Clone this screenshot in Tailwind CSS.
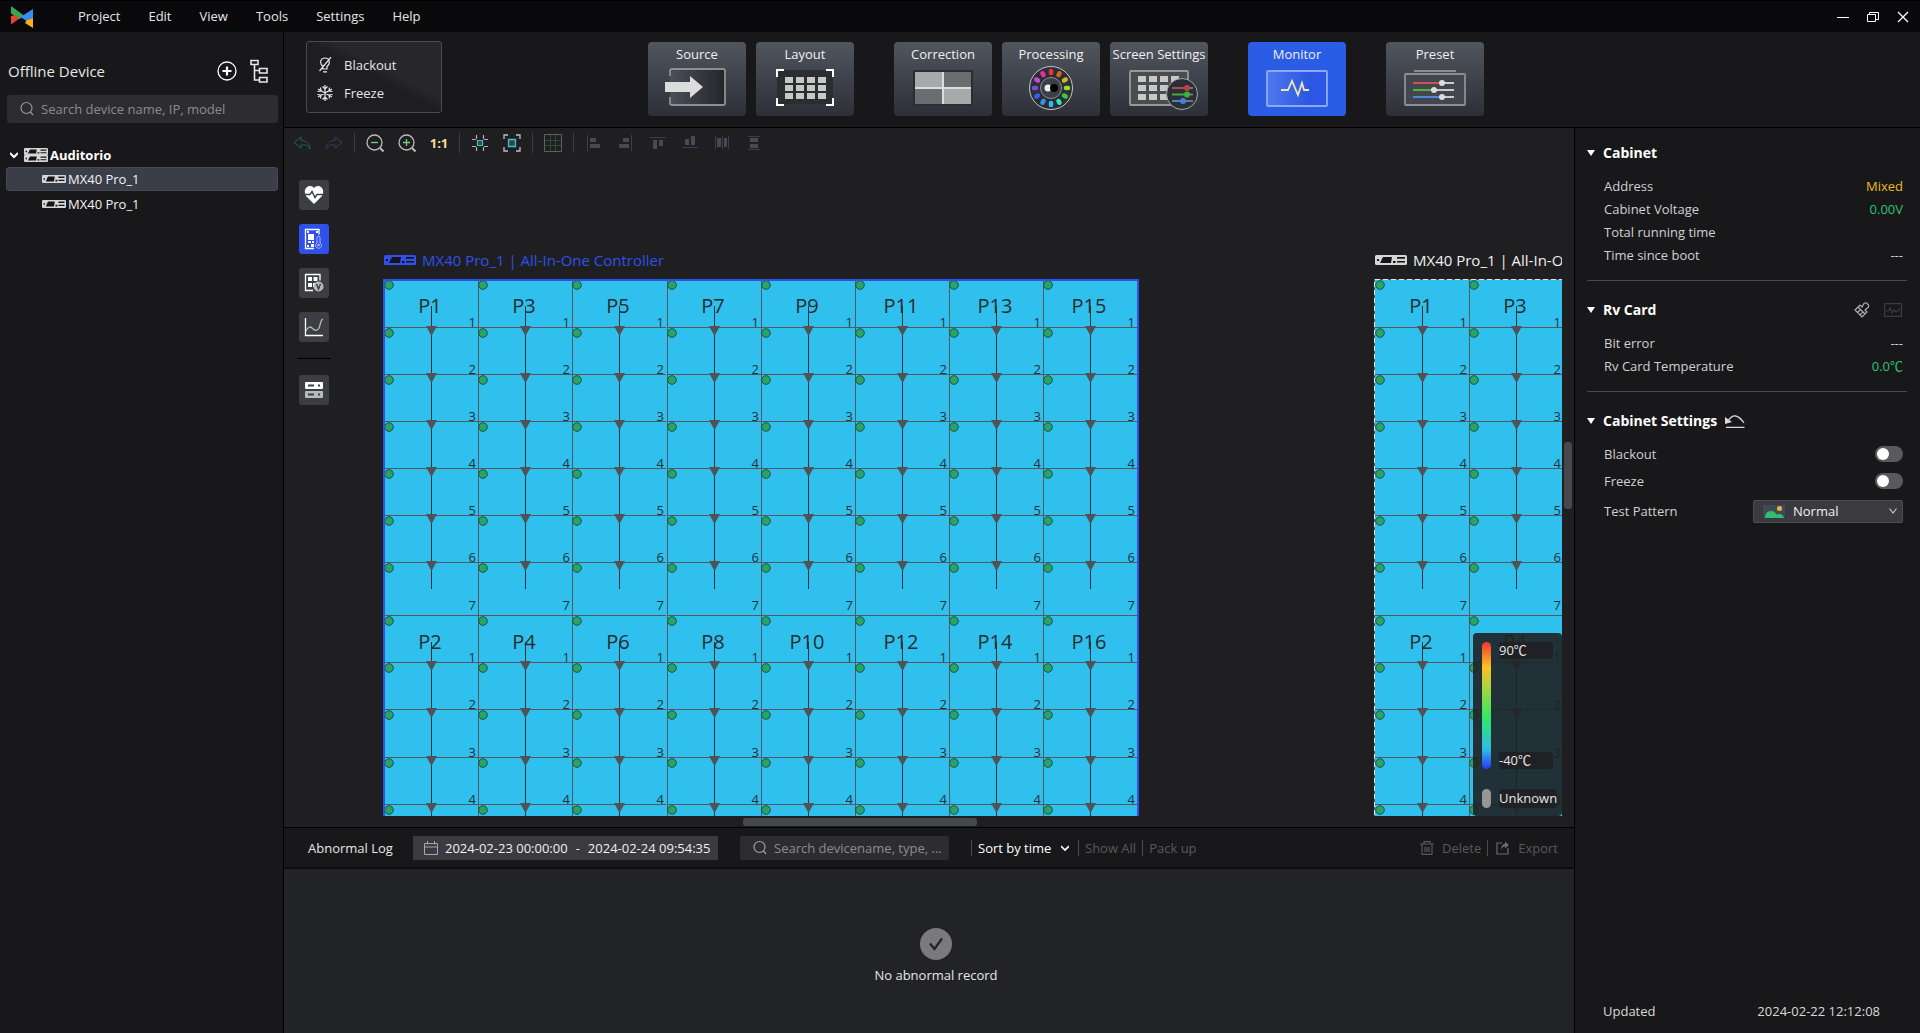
<!DOCTYPE html>
<html lang="en">
<head>
<meta charset="utf-8">
<title>Screen Monitor</title>
<script src="https://cdn.jsdelivr.net/npm/@tailwindcss/browser@4"></script>
</head>
<body class="h-screen flex flex-col overflow-hidden bg-[#18181a] text-[#e6e6e6] text-[13px] leading-5 font-['Open_Sans','Noto_Sans_CJK_SC',sans-serif]">

<svg class="hidden">
  <symbol id="device" viewBox="0 0 32 10" preserveAspectRatio="none">
    <rect width="32" height="10" rx="1.500" fill="currentColor"/>
    <path d="M8 2h9l-1 6H5z" fill="#151517"/>
    <path d="M2 4h2v2H2zM18 6h2.500v2H18zM22 2h8v1.800h-8zM22 6h8v1.600h-8z" fill="#151517"/>
  </symbol>
  <symbol id="search" viewBox="0 0 16 16">
    <circle cx="7.500" cy="7" r="5.500" fill="none" stroke="currentColor" stroke-width="1.200"/>
    <path d="M11.500 11l2.500 3" stroke="currentColor" stroke-width="1.200"/>
  </symbol>
</svg>

<!-- Title bar -->
<header class="h-8 shrink-0 flex items-center bg-[#09090b] px-[11px] border-t border-black">
  <svg class="w-[22px] h-[22px]" viewBox="0 0 22 22">
    <path d="M0 0l13 9.500L9 13 0 7.500z" fill="#34a853"/>
    <path d="M0 18.500V10l4-1 4.500 3.500z" fill="#ea4335"/>
    <path d="M22 3v9L15.500 15 9.500 11z" fill="#3b8bf5"/>
    <path d="M15.500 14.500L22 12v10L14 17z" fill="#fbae17"/>
  </svg>
  <nav class="flex gap-7 ml-[45px] pb-px">
    <a href="#">Project</a><a href="#">Edit</a><a href="#">View</a><a href="#">Tools</a><a href="#">Settings</a><a href="#">Help</a>
  </nav>
  <div class="ml-auto flex items-center gap-[18px]">
    <button aria-label="Minimize"><svg class="w-3 h-3" viewBox="0 0 12 12"><path d="M0 6.500h12" stroke="#fff"/></svg></button>
    <button aria-label="Restore"><svg class="w-3 h-3" viewBox="0 0 12 12" fill="none" stroke="#fff"><path d="M.5 3.500h8v7h-8zM2.500 3.500v-2h9v7h-3"/></svg></button>
    <button aria-label="Close"><svg class="w-3 h-3" viewBox="0 0 12 12"><path d="M1 1l10 10M11 1L1 11" stroke="#fff" stroke-width="1.300"/></svg></button>
  </div>
</header>

<div class="flex-1 min-h-0 flex">
  <!-- Device list -->
  <aside class="w-[284px] shrink-0 border-r border-black">
    <div class="flex items-center mt-[23px] pl-2 pr-[15px] h-8">
      <h2 class="text-[15px]">Offline Device</h2>
      <button aria-label="Add device" class="ml-auto"><svg class="w-5 h-5" viewBox="0 0 20 20" fill="none" stroke="#fff"><circle cx="10" cy="10" r="9" stroke-width="1.300"/><path d="M10 5.500v9M5.500 10h9" stroke-width="2.200"/></svg></button>
      <button aria-label="Topology" class="ml-[13px]"><svg class="w-[18px] h-6" viewBox="0 0 18 24" fill="none" stroke="#e6e6e6" stroke-width="1.600"><path d="M1 1.500h7v4H1zM9.500 9.500H17v4.500H9.500zM9.500 18.500H17V23H9.500zM4.500 6v15h5M4.500 11.500h5"/></svg></button>
    </div>
    <label class="flex items-center h-7 ml-[7px] mr-[5px] mt-2 rounded-[3px] bg-[#2d2d31] pl-3 text-[#98989a]">
      <svg class="w-4 h-4"><use href="#search"/></svg>
      <input class="flex-1 ml-[6px] outline-none bg-transparent placeholder:text-[#8c8c8e]" aria-label="Search devices" placeholder="Search device name, IP, model">
    </label>
    <ul class="mt-[19px] pl-[6px] pr-[5px] text-[#f2f2f2]">
      <li class="flex items-center h-[25px] pl-1 font-bold text-white">
        <svg class="w-2 h-2" viewBox="0 0 8 8"><path d="M0 2l4 4 4-4" fill="none" stroke="#fff" stroke-width="2"/></svg>
        <svg class="w-6 h-[14px] ml-[6px] mr-[2px] text-[#d6d6d6]" viewBox="0 0 24 14"><use href="#device" width="24" height="7"/><use href="#device" y="7" width="24" height="7"/></svg>Auditorio
      </li>
      <li class="flex items-center h-6 pl-[35px] rounded-[3px] bg-[#3b3d49] border border-[#474955]"><svg class="w-6 h-2 mr-[2px] text-[#d6d6d6]"><use href="#device"/></svg>MX40 Pro_1</li>
      <li class="flex items-center h-[25px] pl-9"><svg class="w-6 h-2 mr-[2px] text-[#d6d6d6]"><use href="#device"/></svg>MX40 Pro_1</li>
    </ul>
  </aside>

  <div class="flex-1 min-w-0 flex flex-col">
    <!-- Mode switcher -->
    <div class="h-24 shrink-0 flex items-start border-b border-black pl-[22px] pt-[9px]">
      <div class="w-[136px] h-[72px] rounded-[3px] border border-[#4a4a50] bg-linear-to-tr from-[#1e1e22] from-50% to-[#27272b] to-60% flex flex-col justify-center gap-2 pl-[10px] pt-[3px]">
        <button class="flex items-center gap-[11px] h-5">
          <svg class="w-4 h-4" viewBox="0 0 16 16" fill="none" stroke="#e6e6e6" stroke-width="1.200"><path d="M6 12V9.500C2 6 3.500 1 8 1s6 5 2 8.500V12zM6 14.800h4M14 0L2.500 14"/></svg>Blackout</button>
        <button class="flex items-center gap-[11px] h-5">
          <svg class="w-4 h-4" viewBox="0 0 16 16" fill="none" stroke="#e6e6e6" stroke-width="1.200"><path d="M8 0v16M1 4l14 8M15 4L1 12M5.500 1.500L8 4l2.500-2.500M5.500 14.500L8 12l2.500 2.500M.5 6.500L4 6l-.5-3.500M15.500 6.500L12 6l.5-3.500M.5 9.500L4 10l-.5 3.500M15.500 9.500L12 10l.5 3.500"/></svg>Freeze</button>
      </div>
      <nav class="flex gap-10 ml-[206px] mt-px text-[#f0f0f0]">
        <div class="flex gap-[10px]">
          <button class="w-[98px] h-[74px] rounded-[4px] bg-linear-to-b from-[#50555e] to-[#2e3038] flex flex-col items-center pt-[2px] whitespace-nowrap">Source
            <svg class="w-[70px] h-[46px] mt-px" viewBox="0 0 70 46"><defs><linearGradient id="src"><stop stop-color="#4b4f58"/><stop offset="1" stop-color="#242529"/></linearGradient></defs>
              <rect x="8" y="4" width="55" height="36" rx="2" fill="url(#src)"/><path d="M8 11V6q0-2 2-2h51q2 0 2 2v32q0 2-2 2H10q-2 0-2-2v-6" fill="none" stroke="#8c8f93" stroke-width="1.800"/><path d="M3 17h25v-6l13 11-13 11v-6H3z" fill="#dcdcdc"/></svg></button>
          <button class="w-[98px] h-[74px] rounded-[4px] bg-linear-to-b from-[#50555e] to-[#2e3038] flex flex-col items-center pt-[2px] whitespace-nowrap">Layout
            <svg class="w-[60px] h-[46px] mt-px" viewBox="0 0 60 46"><path d="M2 5h56v34H2z" fill="#2b2d31"/><path d="M2 12V5h7M51 5h7v7M58 33v7h-7M9 40H2v-7" fill="none" stroke="#fff" stroke-width="2"/><path d="M10 12h8v6h-8zm11 0h8v6h-8zm11 0h8v6h-8zm11 0h8v6h-8zM10 20h8v6h-8zm11 0h8v6h-8zm11 0h8v6h-8zm11 0h8v6h-8zM10 28h8v6h-8zm11 0h8v6h-8zm11 0h8v6h-8zm11 0h8v6h-8z" fill="#c8c8c8"/></svg></button>
        </div>
        <div class="flex gap-[10px]">
          <button class="w-[98px] h-[74px] rounded-[4px] bg-linear-to-b from-[#50555e] to-[#2e3038] flex flex-col items-center pt-[2px] whitespace-nowrap">Correction
            <svg class="w-[62px] h-[46px] mt-px" viewBox="0 0 62 46"><path d="M1 5h60v36H1z" fill="#2b2d33"/><path d="M3 7h28v16H3zM31 24h28v15H31z" fill="#a8a9ab"/><path d="M31 7h28v16H31zM3 24h28v15H3z" fill="#6c6d70"/><path d="M3 23h56M31 7v32" stroke="#dcdcdc" stroke-width="2"/></svg></button>
          <button class="w-[98px] h-[74px] rounded-[4px] bg-linear-to-b from-[#50555e] to-[#2e3038] flex flex-col items-center pt-[2px] whitespace-nowrap">Processing
            <svg class="w-[46px] h-[46px] mt-px" viewBox="-23 -23 46 46"><circle r="21.500" fill="#2b2e34" stroke="#c4c6c8"/><circle r="10.500" fill="#3c3f46" stroke="#8b8d91"/><circle cx="-3" r="3.500" fill="#eee"/><circle cx="3" r="4" fill="#000"/>
              <g stroke-width="4.500" stroke-linecap="round"><path d="M0-17v2" stroke="#f03434"/><path d="M8.500-14.700l-1 1.700" stroke="#d06a1c"/><path d="M14.700-8.500L13-7.500" stroke="#ccb434"/><path d="M17 0h-2" stroke="#95e02a"/><path d="M14.700 8.500L13 7.500" stroke="#2fd038"/><path d="M8.500 14.700l-1-1.700" stroke="#2fe8b4"/><path d="M0 17v-2" stroke="#2cbcf0"/><path d="M-8.500 14.700l1-1.700" stroke="#2f96ea"/><path d="M-14.700 8.500l1.700-1" stroke="#3c5cf0"/><path d="M-17 0h2" stroke="#7d4ad8"/><path d="M-14.700-8.500l1.700 1" stroke="#c44ccc"/><path d="M-8.500-14.700l1 1.700" stroke="#f42ca4"/></g></svg></button>
          <button class="w-[98px] h-[74px] rounded-[4px] bg-linear-to-b from-[#50555e] to-[#2e3038] flex flex-col items-center pt-[2px] whitespace-nowrap">Screen Settings
            <svg class="w-[80px] h-[46px] mt-px" viewBox="0 0 80 46"><rect x="11" y="6" width="58" height="34" rx="1" fill="#4a4c50" stroke="#97999b" stroke-width="1.800"/><path d="M19 11h8v6h-8zm11 0h8v6h-8zm11 0h8v6h-8zm11 0h8v6h-8zM19 20h8v6h-8zm11 0h8v6h-8zm11 0h8v6h-8zM19 29h8v6h-8zm11 0h8v6h-8zm11 0h8v6h-8z" fill="#c8c8c8"/><circle cx="63" cy="29" r="15.500" fill="#2b2e34" stroke="#a4a6a8"/><path d="M53 23h21M53 29.500h21M53 36h21" stroke="#8b8d91" stroke-width="1.500"/><path d="M53 23h15" stroke="#c0404a" stroke-width="1.500"/><path d="M53 29.500h15" stroke="#3ab434" stroke-width="1.500"/><path d="M53 36h10" stroke="#3f83d8" stroke-width="1.500"/><circle cx="68" cy="23" r="3" fill="#c0404a"/><circle cx="68" cy="29.500" r="3" fill="#3ab434"/><circle cx="64" cy="36" r="3" fill="#3f83d8"/></svg></button>
        </div>
        <button class="w-[98px] h-[74px] rounded-[4px] bg-[#2b5ce6] flex flex-col items-center pt-[2px] whitespace-nowrap">Monitor
          <svg class="w-[62px] h-[46px] mt-px" viewBox="0 0 62 46"><defs><linearGradient id="mon"><stop stop-color="#5078ee"/><stop offset=".7" stop-color="#2b57e4"/></linearGradient></defs><rect x="1" y="6" width="60" height="35" rx="1" fill="url(#mon)" stroke="#8ea9f4" stroke-width="1.800"/><path d="M15 25h7l4-9 6 14 4-12 2 7h5" fill="none" stroke="#f0e8b4" stroke-width="1.800"/></svg></button>
        <button class="w-[98px] h-[74px] rounded-[4px] bg-linear-to-b from-[#50555e] to-[#2e3038] flex flex-col items-center pt-[2px] whitespace-nowrap">Preset
          <svg class="w-[62px] h-[46px] mt-px" viewBox="0 0 62 46"><path d="M10 6h42" stroke="#8b8d91" stroke-width="1.800"/><rect x="1" y="9" width="60" height="31" rx="1" fill="#43464d" stroke="#8c9092" stroke-width="1.800"/><path d="M9 18h41M9 25h41M9 32h41" stroke="#c8ccd2" stroke-width="1.800"/><path d="M9 18h28" stroke="#c8464e" stroke-width="1.800"/><path d="M9 25h20" stroke="#3ab434" stroke-width="1.800"/><path d="M9 32h28" stroke="#3f83e0" stroke-width="1.800"/><g fill="#dcdcdc"><circle cx="38" cy="18" r="3"/><circle cx="30" cy="25" r="3"/><circle cx="38" cy="32" r="3"/></g></svg></button>
      </nav>
    </div>

    <div class="flex-1 min-h-0 flex">
      <main class="flex-1 min-w-0 flex flex-col">
        <div class="flex-1 min-h-0 flex flex-col bg-[#1f1f21] pr-3 pb-[11px] relative">
          <!-- Edit toolbar -->
          <div class="h-8 shrink-0 flex items-center pl-[2px] pb-[2px]">
            <button aria-label="Undo" class="w-8 flex justify-center"><svg class="w-[18px] h-[14px]" viewBox="0 0 18 14" fill="none" stroke="#285a5a"><path d="M8 .8L1 6.500l7 5.500V9c4-.5 7 0 9 4-.5-6-4-8.500-9-8.500z"/></svg></button>
            <button aria-label="Redo" class="w-8 flex justify-center"><svg class="w-[18px] h-[14px]" viewBox="0 0 18 14" fill="none" stroke="#2f3f63"><path d="M10 .8l7 5.700L10 12V9c-4-.5-7 0-9 4 .5-6 4-8.500 9-8.500z"/></svg></button>
            <span class="w-px h-5 mx-1 bg-[#3c3c3e]"></span>
            <button aria-label="Zoom out" class="w-8 flex justify-center"><svg class="w-[18px] h-[18px]" viewBox="0 0 18 18" fill="none" stroke="#bbb" stroke-width="1.300"><circle cx="8.500" cy="8.500" r="7.500"/><path d="M14 14l3.500 3.500" stroke-width="2"/><path d="M5 8.500h7" stroke="#6fd07c"/></svg></button>
            <button aria-label="Zoom in" class="w-8 flex justify-center"><svg class="w-[18px] h-[18px]" viewBox="0 0 18 18" fill="none" stroke="#bbb" stroke-width="1.300"><circle cx="8.500" cy="8.500" r="7.500"/><path d="M14 14l3.500 3.500" stroke-width="2"/><path d="M5 8.500h7M8.500 5v7" stroke="#6fd07c"/></svg></button>
            <button class="w-8 font-bold text-[#f2dc94]">1:1</button>
            <span class="w-px h-5 mx-1 bg-[#3c3c3e]"></span>
            <button aria-label="Centre" class="w-8 flex justify-center"><svg class="w-[18px] h-[18px]" viewBox="0 0 18 18" fill="none" stroke="#b0b0b0" stroke-width="1.200"><path d="M6.500 6.500h5v5h-5z" fill="#3d4446" stroke="#35c4c4"/><path d="M1 5.500h4M5.500 1v4M17 5.500h-4M12.500 1v4M1 12.500h4M5.500 17v-4M17 12.500h-4M12.500 17v-4"/></svg></button>
            <button aria-label="Fit" class="w-8 flex justify-center"><svg class="w-[18px] h-[18px]" viewBox="0 0 18 18" fill="none" stroke="#c0c0c0" stroke-width="1.300"><path d="M5.500 5.500h7v7h-7z" fill="#3d4446" stroke="#35c4c4"/><path d="M1 5V1h4M13 1h4v4M17 13v4h-4M5 17H1v-4"/></svg></button>
            <span class="w-px h-5 mx-1 bg-[#3c3c3e]"></span>
            <button aria-label="Grid" class="w-8 flex justify-center"><svg class="w-[18px] h-[18px]" viewBox="0 0 18 18" fill="none" stroke="#606062"><path d="M6.500 1v16M11.500 1v16M1 6.500h16M1 11.500h16" stroke="#2c4c34"/><path d="M.5.5h17v17H.5z"/></svg></button>
            <span class="w-px h-5 mx-1 bg-[#3c3c3e]"></span>
            <button aria-label="Align left" class="w-8 flex justify-center"><svg class="w-4 h-4" viewBox="0 0 16 16" fill="#4a4a4d"><path d="M1 0h1v16H1z" fill="#30405e"/><path d="M4 3h6v4H4zM4 9h10v4H4z"/></svg></button>
            <button aria-label="Align right" class="w-8 flex justify-center"><svg class="w-4 h-4" viewBox="0 0 16 16" fill="#4a4a4d"><path d="M13 0h1v16h-1z" fill="#30405e"/><path d="M5 3h6v4H5zM1 9h10v4H1z"/></svg></button>
            <button aria-label="Align top" class="w-8 flex justify-center"><svg class="w-4 h-4" viewBox="0 0 16 16" fill="#4a4a4d"><path d="M0 2h16v1H0z" fill="#30405e"/><path d="M3 5h4v9H3zM9 5h4v6H9z"/></svg></button>
            <button aria-label="Align bottom" class="w-8 flex justify-center"><svg class="w-4 h-4" viewBox="0 0 16 16" fill="#4a4a4d"><path d="M0 12h16v1H0z" fill="#30405e"/><path d="M3 4h4v6H3zM9 1h4v9H9z"/></svg></button>
            <button aria-label="Distribute horizontally" class="w-8 flex justify-center"><svg class="w-4 h-4" viewBox="0 0 16 16" fill="#4a4a4d"><path d="M1 1h1v13H1zM8 1h1v13H8zM14 1h1v13h-1z" fill="#30405e"/><path d="M3 3h4v9H3zM10 3h3v9h-3z"/></svg></button>
            <button aria-label="Distribute vertically" class="w-8 flex justify-center"><svg class="w-4 h-4" viewBox="0 0 16 16" fill="#4a4a4d"><path d="M2 1h12v1H2zM2 14h12v1H2z" fill="#30405e"/><path d="M4 3h8v4H4zM4 9h8v4H4z"/></svg></button>
          </div>

          <!-- Canvas -->
          <div class="flex-1 min-h-0 relative overflow-hidden">
            <div class="flex flex-col items-center gap-[14px] w-[34px] ml-[13px] mt-5">
              <button aria-label="Health" class="w-[30px] h-[30px] rounded-[3px] bg-[#3d3e43] grid place-items-center"><svg class="w-5 h-5" viewBox="0 0 20 20"><path d="M10 19L2 11C-1 6 2 1 6 1c2 0 3 .7 4 2 1-1.300 2-2 4-2 4 0 7 5 4 10z" fill="#fff"/><path d="M0 9.500h6l2-3 3 6 2-3h7" fill="none" stroke="#3d3e43" stroke-width="1.400"/></svg></button>
              <button aria-label="Temperature" class="w-[30px] h-[30px] rounded-[3px] bg-[#3050ec] grid place-items-center"><svg class="w-5 h-[22px]" viewBox="0 0 20 22" fill="#fff"><path d="M10 20.500H1.500v-19H15v5" fill="none" stroke="#fff" stroke-width="1.300"/><path d="M4 6h6v6H4zM3 3h2v2H3zM12 3h2v2h-2zM4 13h3v2H4zM8 13h2v2H8zM3 17h2v2H3zM7 16h3v3H7z"/><path d="M13 15V9q1.500-2 3 0v6q2 1 1.500 3.500-3 3.500-6 0-.5-2.500 1.500-3.500z" fill="#3050ec" stroke="#a9b7f5"/><circle cx="14.500" cy="17" r="1.300" fill="#a9b7f5"/></svg></button>
              <button aria-label="Voltage" class="w-[30px] h-[30px] rounded-[3px] bg-[#3d3e43] grid place-items-center"><svg class="w-5 h-5" viewBox="0 0 20 20"><path d="M9 17.500H1.500v-16H16v6" fill="none" stroke="#fff" stroke-width="1.300"/><path d="M4 4h4v4H4zM9.500 4h4v4h-4zM4 10h4v4H4zM9 10h2v4H9z" fill="#fff"/><circle cx="14.500" cy="13.500" r="5" fill="#b9b9bb"/><path d="M12.500 11l2 5 2-5" fill="none" stroke="#3d3e43" stroke-width="1.400"/></svg></button>
              <button aria-label="Curve" class="w-[30px] h-[30px] rounded-[3px] bg-[#3d3e43] grid place-items-center"><svg class="w-5 h-5" viewBox="0 0 20 20" fill="none" stroke="#fff" stroke-width="1.300"><path d="M1.500 1v17.500H19"/><path d="M2 14c2-4 4-5 6-3s5 4 7 0 1-8 4-9" stroke="#b9b9bb"/></svg></button>
              <span class="w-full h-px mt-[2px] bg-black"></span>
              <button aria-label="Devices" class="w-[30px] h-[30px] mt-[2px] rounded-[3px] bg-[#3d3e43] grid place-items-center"><svg class="w-5 h-[18px]" viewBox="0 0 20 18"><rect x="1" y="1" width="18" height="7" rx="1" fill="#fff"/><rect x="1" y="10" width="18" height="7" rx="1" fill="#b9b9bb"/><path d="M4 3.500h6v2H4zM14 3.500h2v2h-2zM4 12.500h6v2H4zM14 12.500h2v2h-2z" fill="#3d3e43"/></svg></button>
            </div>

            <section class="absolute left-[99px] top-[90px]">
              <h3 class="flex items-center h-5 ml-px text-[15px] text-[#3050ec] whitespace-nowrap"><svg class="w-8 h-[10px] mr-[6px]"><use href="#device"/></svg>MX40 Pro_1 | All-In-One Controller</h3>
              <svg class="wall mt-[9px] w-[756px] h-[672px]" viewBox="0 0 756 672" data-edge="solid"></svg>
            </section>
            <section class="absolute left-[1090px] top-[90px]">
              <h3 class="flex items-center h-5 ml-px text-[15px] text-[#f0f0f0] whitespace-nowrap"><svg class="w-8 h-[10px] mr-[6px] text-[#d6d6d6]"><use href="#device"/></svg>MX40 Pro_1 | All-In-One Controller</h3>
              <svg class="wall mt-[9px] w-[756px] h-[672px]" viewBox="0 0 756 672" data-edge="dashed"></svg>
            </section>

            <!-- Temperature legend -->
            <div class="absolute right-0 bottom-0 w-[89px] h-[183px] rounded-[4px] bg-[#202124]/90 p-[9px] flex flex-col gap-5">
              <div class="flex gap-2">
                <div class="w-[9px] h-[127px] shrink-0 rounded-full bg-[linear-gradient(#f03434,#fbc424_20%,#30e868_60%,#30b8e8_85%,#2838f0)]"></div>
                <div class="flex-1 flex flex-col justify-between">
                  <span class="h-[17px] leading-[17px] rounded-[3px] bg-[#202124]">90℃</span>
                  <span class="h-[17px] leading-[17px] rounded-[3px] bg-[#202124]">-40℃</span>
                </div>
              </div>
              <div class="flex gap-2">
                <div class="w-[9px] h-[19px] shrink-0 rounded-full bg-[#969696]"></div>
                <span class="flex-1 h-[19px] leading-[18px] rounded-[3px] bg-[#202124]">Unknown</span>
              </div>
            </div>
          </div>
          <div class="absolute bottom-[1px] left-[459px] w-[234px] h-2 rounded-[3px] bg-[#45494d]"></div>
          <div class="absolute right-[2px] top-[314px] w-2 h-[67px] rounded-[3px] bg-[#45494d]"></div>
        </div>

        <!-- Abnormal log -->
        <div class="h-[42px] shrink-0 flex items-center whitespace-nowrap border-t border-b-2 border-t-black border-b-[#0c0c0e] pl-6 pr-4">
          <h2 class="w-[105px] text-[13px]">Abnormal Log</h2>
          <button class="flex items-center h-6 w-[305px] pl-[11px] bg-[#3a3a40] text-[#f0f0f0]">
            <svg class="w-[14px] h-[14px] mr-[7px]" viewBox="0 0 14 14" fill="none" stroke="#a8a8aa"><path d="M.5 2.500h13v11H.5zM.5 6h13M3.500 0v3.500M10.500 0v3.500"/></svg>
            2024-02-23 00:00:00<span class="mx-2">-</span>2024-02-24 09:54:35</button>
          <label class="flex items-center h-6 w-[209px] ml-[22px] rounded-[3px] bg-[#2d2d31] pl-3 text-[#a0a0a2]">
            <svg class="w-4 h-4 shrink-0"><use href="#search"/></svg>
            <input class="w-[170px] ml-[6px] outline-none bg-transparent placeholder:text-[#8c8c8e]" aria-label="Search log" placeholder="Search devicename, type, ...">
          </label>
          <span class="w-px h-4 ml-[22px] mr-[6px] bg-[#4a4a4c]"></span>
          <button class="flex items-center w-[100px] text-white">Sort by time<svg class="w-2 h-2 ml-[10px]" viewBox="0 0 8 8"><path d="M0 2l4 4 4-4" fill="none" stroke="#fff" stroke-width="1.600"/></svg></button>
          <span class="w-px h-4 mr-[6px] bg-[#4a4a4c]"></span>
          <button class="text-[#58585a]">Show All</button>
          <span class="w-px h-4 mx-[6px] bg-[#4a4a4c]"></span>
          <button class="text-[#58585a]">Pack up</button>
          <button class="ml-auto flex items-center gap-2 text-[#58585a]"><svg class="w-[14px] h-[14px]" viewBox="0 0 14 14" fill="none" stroke="#58585a" stroke-width="1.200"><path d="M0 3h14M4 3V.6h6V3M2 3v10.400h10V3M5 6v5M7 6v5M9 6v5"/></svg>Delete</button>
          <span class="w-px h-4 ml-[6px] mr-2 bg-[#4a4a4c]"></span>
          <button class="flex items-center gap-2 text-[#58585a]"><svg class="w-[14px] h-[14px]" viewBox="0 0 14 14" fill="none" stroke="#6a6a6c" stroke-width="1.200"><path d="M6 2H1v11h11V7"/><path d="M9 .5L13 4 9 7.500V5.500q-3 0-4 3.500 0-5.500 4-6.500z" fill="#6a6a6c" stroke="none"/></svg>Export</button>
        </div>
        <div class="h-[164px] shrink-0 bg-[#222327] flex flex-col items-center gap-[5px] pl-[14px] pt-[59px]">
          <svg class="w-8 h-8" viewBox="0 0 32 32"><circle cx="16" cy="16" r="16" fill="#7a7a7c"/><path d="M10 15.500l4.500 5.500L22 10.500" fill="none" stroke="#222327" stroke-width="2.200"/></svg>
          <p>No abnormal record</p>
        </div>
      </main>

      <!-- Cabinet properties -->
      <aside class="w-[346px] shrink-0 flex flex-col border-l border-black pl-3 pr-[13px]">
        <section class="pt-[13px] pb-[14px] border-b border-[#4a4a50]">
          <h2 class="flex items-center h-[23px] text-[14px] font-bold text-white"><svg class="w-2 h-[6px] mr-2" viewBox="0 0 8 6"><path d="M0 0h8L4 6z" fill="#fff"/></svg>Cabinet</h2>
          <dl class="grid grid-cols-[1fr_auto] mt-[10px] pl-[17px] pr-1 auto-rows-[23px] items-center text-[#d0d0d2]">
            <dt>Address</dt><dd class="text-right text-[#eabc1c]">Mixed</dd>
            <dt>Cabinet Voltage</dt><dd class="text-right text-[#2cc474]">0.00V</dd>
            <dt>Total running time</dt><dd></dd>
            <dt>Time since boot</dt><dd class="text-right">---</dd>
          </dl>
        </section>
        <section class="pt-[17px] pb-[14px] border-b border-[#4a4a50]">
          <h2 class="flex items-center h-[23px] text-[14px] font-bold text-white"><svg class="w-2 h-[6px] mr-2" viewBox="0 0 8 6"><path d="M0 0h8L4 6z" fill="#fff"/></svg>Rv Card
            <button aria-label="Clear" class="ml-auto mr-[14px]"><svg class="w-4 h-4" viewBox="0 0 16 16" fill="none" stroke="#b0b0b2" stroke-width="1.200"><path d="M1 8l5-5 2 2 2-3.500q2-1.500 3 0l1 1q1.500 1 0 3L11 8l2 2-5 5zM4 5l7 7M3.500 10.500L6 8M6 12.800l2.500-2.500"/></svg></button>
            <button aria-label="Chart" class="mr-[5px]"><svg class="w-[18px] h-[14px]" viewBox="0 0 18 14" fill="none" stroke="#3c3c3e" stroke-width="1.200"><path d="M.6.6h16.800v12.800H.6zM2 8h2l2-3 2 5 2-3 2 2 4-3"/></svg></button></h2>
          <dl class="grid grid-cols-[1fr_auto] mt-[10px] pl-[17px] pr-1 auto-rows-[23px] items-center text-[#d0d0d2]">
            <dt>Bit error</dt><dd class="text-right">---</dd>
            <dt>Rv Card Temperature</dt><dd class="text-right text-[#2cc474]">0.0℃</dd>
          </dl>
        </section>
        <section class="pt-[17px]">
          <h2 class="flex items-center h-[23px] text-[14px] font-bold text-white"><svg class="w-2 h-[6px] mr-2" viewBox="0 0 8 6"><path d="M0 0h8L4 6z" fill="#fff"/></svg>Cabinet Settings
            <button aria-label="Reset" class="ml-2"><svg class="w-5 h-[14px]" viewBox="0 0 20 14" fill="none" stroke="#d8d8d8" stroke-width="1.300"><path d="M3 7Q10-4 19 9M1 13.300h18.500"/><path d="M0 3v7l7-2z" fill="#d8d8d8" stroke="none"/></svg></button></h2>
          <div class="mt-2 pl-[17px] pr-1 text-[#d0d0d2]">
            <label class="flex items-center justify-between h-[27px]">Blackout<input type="checkbox" role="switch" class="appearance-none w-7 h-4 rounded-full bg-[#5a5a5c] p-[2px] before:block before:w-3 before:h-3 before:rounded-full before:bg-white checked:bg-blue-600"></label>
            <label class="flex items-center justify-between h-[27px]">Freeze<input type="checkbox" role="switch" class="appearance-none w-7 h-4 rounded-full bg-[#5a5a5c] p-[2px] before:block before:w-3 before:h-3 before:rounded-full before:bg-white checked:bg-blue-600"></label>
            <div class="flex items-center justify-between h-[34px]">
              <label for="pattern">Test Pattern</label>
              <div class="relative w-[150px] h-[23px]">
                <select id="pattern" class="appearance-none w-full h-full rounded-[2px] border border-[#4c4d55] bg-[#3a3a40] pl-[39px] leading-5 text-[#f0f0f0]"><option>Normal</option></select>
                <svg class="absolute left-[9px] top-1 w-6 h-[15px] pointer-events-none" viewBox="0 0 24 15"><path d="M0 0h24v15H0z" fill="#414956" stroke="#2a2e36"/><path d="M3 14q0-7 6-7 4 0 5.500 3.500Q20 8.500 22 14z" fill="#34bc70"/><circle cx="17.500" cy="4.500" r="2.500" fill="#f4b03c"/></svg>
                <svg class="absolute right-[6px] top-2 w-2 h-[6px] pointer-events-none" viewBox="0 0 8 6"><path d="M.5.5L4 5 7.500.5" fill="none" stroke="#c4c4c6" stroke-width="1.200"/></svg>
              </div>
            </div>
          </div>
        </section>
        <footer class="mt-auto mb-3 flex justify-between pl-4 pr-[27px] text-[#d8d8d8]"><span>Updated</span><time>2024-02-22 12:12:08</time></footer>
      </aside>
    </div>
  </div>
</div>

<script>
// Draws the cabinet map of one controller: 8 columns, ports of 7 cabinets each.
const PITCH = 94.2, PORT = 336;
const ROWS = [[0, 48, 95, 142, 189, 236, 283], [0, 47, 94, 142, 189, 236, 283]];
for (const wall of document.querySelectorAll('.wall')) {
  const solid = wall.dataset.edge === 'solid';
  let s = '<rect width="756" height="672" fill="#30c0ee"/>';
  for (let c = 0; c < 8; c++) {
    const x = Math.round(1 + c * PITCH), mid = Math.round(48 + c * PITCH) + .5;
    if (c) s += `<path d="M${x + .5} 0v672" stroke="#57585c"/>`;
    for (let p = 0; p < 2; p++) {
      const y = p * PORT, rows = ROWS[p];
      s += `<text x="${mid - 1.5}" y="${y + 34}" text-anchor="middle" font-size="20" fill="#2a2c30">P${c * 2 + p + 1}</text>`;
      rows.forEach((r, i) => {
        const top = y + r;
        const end = y + (i < 6 ? rows[i + 1] : PORT);
        if (top) s += `<path d="M${x} ${top + .5}h94" stroke="#57585c"/>`;
        s += `<circle cx="${x + 5}" cy="${top + 6}" r="4.300" fill="#28a468" stroke="#1f5148"/>`;
        s += `<text x="${x + 92}" y="${i < 6 ? end : end - 5}" text-anchor="end" font-size="13" fill="#23303a">${i + 1}</text>`;
      });
      s += `<path d="M${mid} ${y + 27}v283" stroke="#17323c"/>`;
      rows.slice(1).forEach(r => { s += `<path d="M${mid - 5.5} ${y + r - 1}h11l-5.500 10z" fill="#505256"/>`; });
    }
  }
  s += solid
    ? '<path d="M1 672V1h754v671" fill="none" stroke="#3050ec" stroke-width="2"/>'
    : '<path d="M.5 672V.5h755V672" fill="none" stroke="#57585c"/><path d="M.5 672V.5h755V672" fill="none" stroke="#e8e8e8" stroke-dasharray="5 3"/>';
  wall.innerHTML = s;
}
</script>
</body>
</html>
